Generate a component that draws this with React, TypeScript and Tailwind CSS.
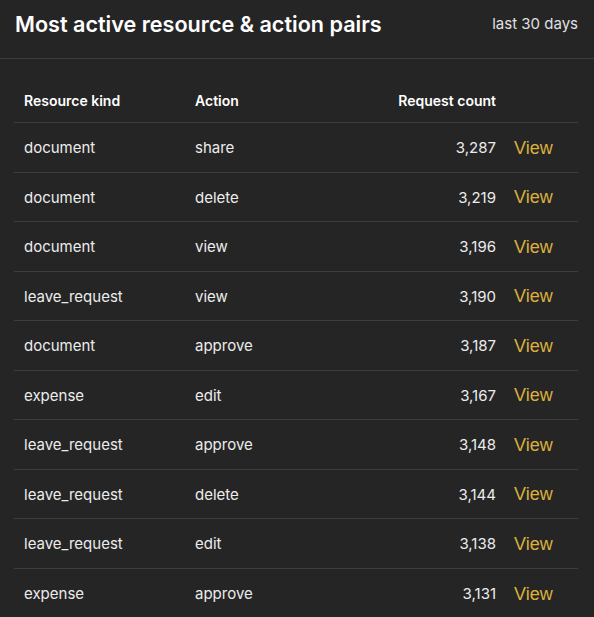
import React from "react";

const rows: [string, string, string][] = [
  ["document", "share", "3,287"],
  ["document", "delete", "3,219"],
  ["document", "view", "3,196"],
  ["leave_request", "view", "3,190"],
  ["document", "approve", "3,187"],
  ["expense", "edit", "3,167"],
  ["leave_request", "approve", "3,148"],
  ["leave_request", "delete", "3,144"],
  ["leave_request", "edit", "3,138"],
  ["expense", "approve", "3,131"],
];

export default function App() {
  return (
    <div
      className="w-[594px] h-[617px] overflow-hidden bg-[#252525] text-[#ececec]"
      style={{ fontFamily: "Inter, 'Noto Sans', sans-serif" }}
    >
      <div className="flex items-center justify-between h-[59px] pb-[10px] px-[15px] pr-[16px] border-b border-[#3d3d3d]">
        <h1 className="text-[21.6px] font-semibold text-white">
          Most active resource &amp; action pairs
        </h1>
        <span className="text-[15px] text-[#e0e0e0]">last 30 days</span>
      </div>
      <div className="px-[14px] pt-[18px]">
        <div className="w-[564px]">
          <div className="flex items-center h-[46px] pt-[2px] border-b border-[#3d3d3d] text-[14px] font-semibold text-white">
            <div className="w-[171px] pl-[10px]">Resource kind</div>
            <div className="w-[150px] pl-[10px]">Action</div>
            <div className="w-[161px] text-right">Request count</div>
            <div className="flex-1" />
          </div>
          {rows.map(([kind, action, count], i) => (
            <div
              key={i}
              className={`flex items-center h-[49.5px] pt-[2px] text-[15px] ${
                i < rows.length - 1 ? "border-b border-[#3d3d3d]" : ""
              }`}
            >
              <div className="w-[171px] pl-[10px]">{kind}</div>
              <div className="w-[150px] pl-[10px]">{action}</div>
              <div className="w-[161px] text-right">{count}</div>
              <div
                className="flex-1 pl-[18px] text-[18px] text-[#dcb03c]"
                style={{ fontFamily: "'Liberation Sans', Arial, sans-serif" }}
              >
                View
              </div>
            </div>
          ))}
        </div>
      </div>
    </div>
  );
}
